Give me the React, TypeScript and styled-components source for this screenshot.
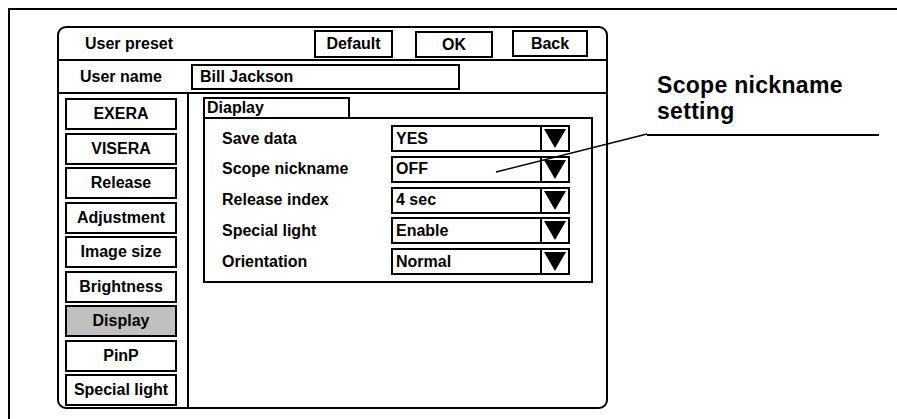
import React from "react";
import styled, { createGlobalStyle } from "styled-components";

const GlobalStyle = createGlobalStyle`
  body {
    margin: 0;
    background: #fff;
    color: #000;
    font-family: "Liberation Sans", Arial, sans-serif;
  }
`;

const Frame = styled.div`
  position: relative;
  box-sizing: border-box;
  margin: 8px 0 0 8px;
  height: 411px;
  border-top: 2px solid #000;
  border-left: 2px solid #000;
  padding: 16px 0 0 47px;
  display: flex;
  align-items: flex-start;
`;

const Panel = styled.div`
  box-sizing: border-box;
  width: 551px;
  height: 383px;
  border: 2px solid #000;
  border-radius: 9px;
  display: flex;
  flex-direction: column;
  overflow: hidden;
  font-weight: bold;
  font-size: 16px;
`;

const HeaderRow = styled.div`
  box-sizing: border-box;
  height: 33px;
  border-bottom: 2px solid #000;
  display: flex;
  align-items: center;
  padding: 0 18px 0 26px;
`;

const Title = styled.div`
  flex: 1;
`;

const HeaderButton = styled.div<{ $w: number; $h: number; $gap: number; $shift?: number }>`
  box-sizing: border-box;
  width: ${(p) => p.$w}px;
  height: ${(p) => p.$h}px;
  margin-right: ${(p) => p.$gap}px;
  margin-top: ${(p) => (p.$shift || 0) * 2}px;
  border: 2px solid #000;
  display: flex;
  align-items: center;
  justify-content: center;
`;

const NameRow = styled.div`
  box-sizing: border-box;
  height: 33px;
  border-bottom: 2px solid #000;
  display: flex;
  align-items: center;
`;

const NameLabel = styled.div`
  width: 111px;
  padding-left: 21px;
`;

const NameInput = styled.div`
  box-sizing: border-box;
  width: 269px;
  height: 26px;
  border: 2px solid #000;
  padding-left: 7px;
  display: flex;
  align-items: center;
`;

const Body = styled.div`
  flex: 1;
  display: flex;
`;

const Sidebar = styled.div`
  box-sizing: border-box;
  width: 130px;
  border-right: 2px solid #000;
  padding: 4px 0 0 6px;
  display: flex;
  flex-direction: column;
  gap: 2.5px;
`;

const SideButton = styled.div<{ $active?: boolean }>`
  box-sizing: border-box;
  width: 112px;
  height: 32px;
  border: 2px solid #000;
  background: ${(p) => (p.$active ? "#c0c0c0" : "#fff")};
  display: flex;
  align-items: center;
  justify-content: center;
`;

const Content = styled.div`
  flex: 1;
  padding: 3px 0 0 14px;
`;

const Tab = styled.div`
  box-sizing: border-box;
  width: 147px;
  height: 22px;
  border: 2px solid #000;
  border-bottom: none;
  padding-left: 2px;
  line-height: 18px;
`;

const SettingsBox = styled.div`
  box-sizing: border-box;
  width: 390px;
  margin-top: -2px;
  border: 2px solid #000;
  padding: 6px 0 6px 17px;
  display: grid;
  grid-template-columns: 169px 179px;
  row-gap: 3.8px;
  align-items: center;
`;

const SettingLabel = styled.div``;

const Select = styled.div`
  box-sizing: border-box;
  height: 27px;
  border: 2px solid #000;
  display: flex;
`;

const SelectValue = styled.div`
  flex: 1;
  padding-left: 3px;
  display: flex;
  align-items: center;
`;

const SelectArrow = styled.div`
  box-sizing: border-box;
  width: 28px;
  border-left: 2px solid #000;
  display: flex;
  align-items: center;
  justify-content: center;
`;

const Callout = styled.div`
  margin: 46px 0 0 39px;
`;

const CalloutText = styled.div`
  margin-left: 10px;
  font-weight: bold;
  font-size: 23px;
  line-height: 26px;
  letter-spacing: 0.3px;
`;

const CalloutRule = styled.div`
  width: 232px;
  margin-top: 10px;
  border-top: 2px solid #000;
`;

const Leader = styled.svg`
  position: absolute;
  left: 0;
  top: 0;
  width: 700px;
  height: 200px;
  pointer-events: none;
`;

const sideItems = [
  "EXERA",
  "VISERA",
  "Release",
  "Adjustment",
  "Image size",
  "Brightness",
  "Display",
  "PinP",
  "Special light",
];

const settings = [
  { label: "Save data", value: "YES" },
  { label: "Scope nickname", value: "OFF" },
  { label: "Release index", value: "4 sec" },
  { label: "Special light", value: "Enable" },
  { label: "Orientation", value: "Normal" },
];

const DownTriangle = () => (
  <svg width="22" height="19" viewBox="0 0 22 19">
    <polygon points="0,0 22,0 11,19" fill="#000" />
  </svg>
);

export default function App() {
  return (
    <>
      <GlobalStyle />
      <Frame>
        <Panel>
          <HeaderRow>
            <Title>User preset</Title>
            <HeaderButton $w={79} $h={28} $gap={22}>Default</HeaderButton>
            <HeaderButton $w={78} $h={27} $gap={19} $shift={1}>OK</HeaderButton>
            <HeaderButton $w={76} $h={27} $gap={0}>Back</HeaderButton>
          </HeaderRow>
          <NameRow>
            <NameLabel>User name</NameLabel>
            <NameInput>Bill Jackson</NameInput>
          </NameRow>
          <Body>
            <Sidebar>
              {sideItems.map((item) => (
                <SideButton key={item} $active={item === "Display"}>
                  {item}
                </SideButton>
              ))}
            </Sidebar>
            <Content>
              <Tab>Diaplay</Tab>
              <SettingsBox>
                {settings.map((s) => (
                  <React.Fragment key={s.label}>
                    <SettingLabel>{s.label}</SettingLabel>
                    <Select>
                      <SelectValue>{s.value}</SelectValue>
                      <SelectArrow>
                        <DownTriangle />
                      </SelectArrow>
                    </Select>
                  </React.Fragment>
                ))}
              </SettingsBox>
            </Content>
          </Body>
        </Panel>
        <Callout>
          <CalloutText>
            Scope nickname
            <br />
            setting
          </CalloutText>
          <CalloutRule />
        </Callout>
        <Leader viewBox="0 0 700 200">
          <line x1="637" y1="124" x2="486" y2="162" stroke="#000" strokeWidth="1.5" />
        </Leader>
      </Frame>
    </>
  );
}
